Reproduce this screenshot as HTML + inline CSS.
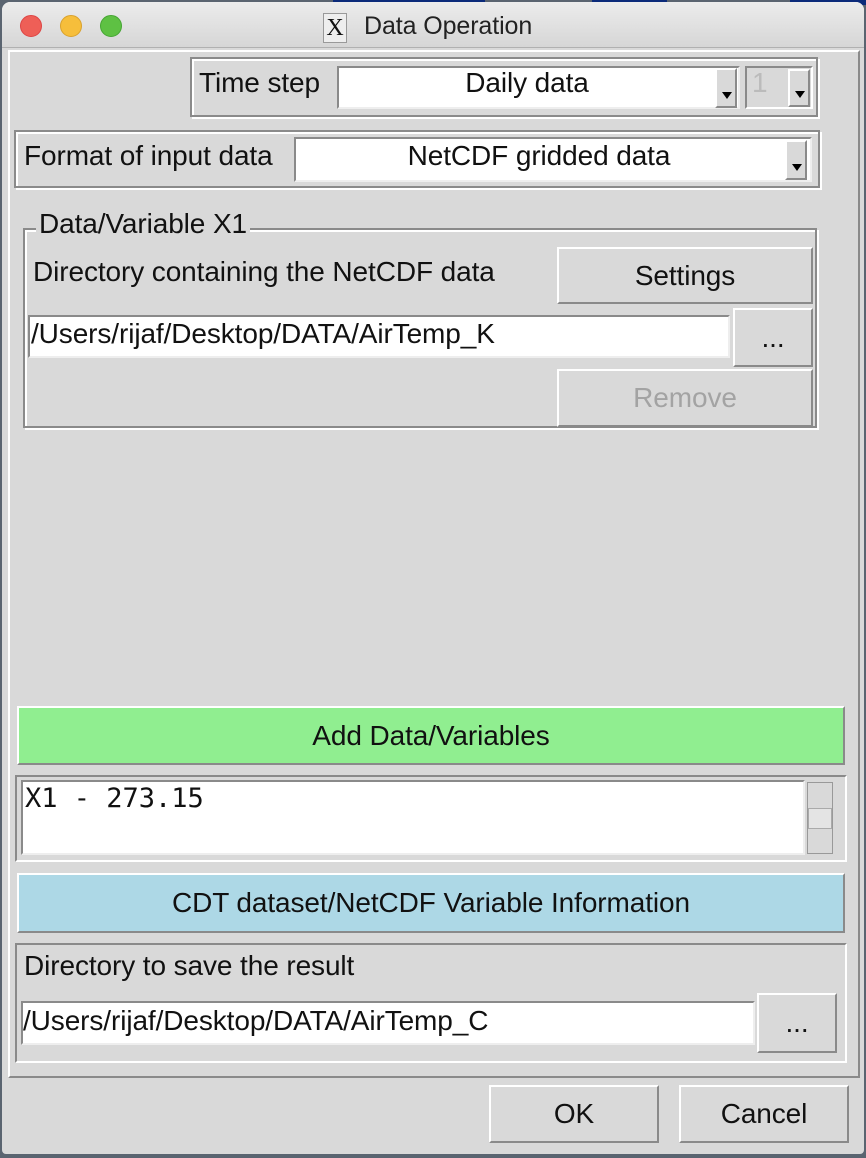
<!DOCTYPE html>
<html><head><meta charset="utf-8"><style>
*{box-sizing:border-box;margin:0;padding:0}
body{width:866px;height:1158px;background:#5a6470;position:relative;overflow:hidden;font-family:"Liberation Sans",Arial,sans-serif;font-size:28px;color:#111;letter-spacing:-0.1px}
.a{position:absolute}
.win{left:2px;top:2px;width:862px;height:1152px;background:#d9d9d9;border-radius:8px 8px 4px 4px;overflow:hidden}
.title{left:0;top:0;width:862px;height:46px;background:linear-gradient(#ececec,#d6d6d6);border-bottom:1px solid #b0b0b0}
.dot{width:22px;height:22px;border-radius:50%;top:13px}
.sunk{border-style:solid;border-width:2px;border-color:#8a8a8a #fff #fff #8a8a8a}
.raise{border-style:solid;border-width:2px;border-color:#fff #8a8a8a #8a8a8a #fff}
.groove{border:2px solid #8a8a8a;box-shadow:inset 2px 2px 0 #fff,2px 2px 0 #fff}
.ent{background:#fff;border-style:solid;border-width:2px;border-color:#8a8a8a #eee #eee #8a8a8a}
.btn{background:#d9d9d9;display:flex;align-items:center;justify-content:center}
.arr{width:22px;background:#d9d9d9}
.arr:after{content:"";position:absolute;left:5px;bottom:7px;border-left:5px solid transparent;border-right:5px solid transparent;border-top:7px solid #000}
.t{white-space:nowrap}
</style></head><body>
<div class="a" style="left:333px;top:0;width:152px;height:5px;background:#0b2a7a"></div>
<div class="a" style="left:592px;top:0;width:75px;height:5px;background:#0b2a7a"></div>
<div class="a" style="left:790px;top:0;width:76px;height:5px;background:#0b2a7a"></div>
<div class="a win">
 <div class="a title"></div>
 <div class="a dot" style="left:18px;background:#ee5f57;border:1px solid #d44"></div>
 <div class="a dot" style="left:58px;background:#f6be3b;border:1px solid #d9a12c"></div>
 <div class="a dot" style="left:98px;background:#5ec143;border:1px solid #45a532"></div>
 <div class="a" style="left:321px;top:11px;width:24px;height:30px;border:1px solid #999;background:#eee;font-family:'Liberation Serif',serif;font-size:24px;text-align:center;line-height:28px">X</div>
 <div class="a t" style="left:362px;top:10px;font-size:25px;color:#222">Data Operation</div>
 <div class="a sunk" style="left:6px;top:48px;width:852px;height:1028px;border-color:#fff #8a8a8a #8a8a8a #fff"></div>
 <div class="a groove" style="left:188px;top:55px;width:628px;height:60px"></div>
 <div class="a t" style="left:197px;top:65px">Time step</div>
 <div class="a ent" style="left:335px;top:64px;width:403px;height:43px"></div>
 <div class="a t" style="left:335px;top:65px;width:380px;text-align:center">Daily data</div>
 <div class="a arr raise" style="left:713px;top:66px;height:40px"></div>
 <div class="a sunk" style="left:743px;top:64px;width:68px;height:43px"></div>
 <div class="a t" style="left:750px;top:65px;color:#bbb">1</div>
 <div class="a arr raise" style="left:786px;top:67px;height:38px"></div>
 <div class="a groove" style="left:12px;top:128px;width:806px;height:58px"></div>
 <div class="a t" style="left:22px;top:138px">Format of input data</div>
 <div class="a ent" style="left:292px;top:135px;width:518px;height:45px"></div>
 <div class="a t" style="left:292px;top:138px;width:490px;text-align:center">NetCDF gridded data</div>
 <div class="a arr raise" style="left:783px;top:138px;height:40px"></div>
 <div class="a groove" style="left:21px;top:226px;width:794px;height:200px"></div>
 <div class="a t" style="left:34px;top:206px;background:#d9d9d9;padding:0 3px">Data/Variable X1</div>
 <div class="a t" style="left:31px;top:254px">Directory containing the NetCDF data</div>
 <div class="a btn raise" style="left:555px;top:245px;width:256px;height:57px">Settings</div>
 <div class="a ent" style="left:26px;top:313px;width:702px;height:43px"></div>
 <div class="a t" style="left:29px;top:316px">/Users/rijaf/Desktop/DATA/AirTemp_K</div>
 <div class="a btn raise" style="left:731px;top:306px;width:80px;height:59px">...</div>
 <div class="a btn raise" style="left:555px;top:367px;width:256px;height:58px;color:#a3a3a3">Remove</div>
 <div class="a btn raise" style="left:15px;top:704px;width:828px;height:59px;background:#90ee90">Add Data/Variables</div>
 <div class="a sunk" style="left:13px;top:773px;width:832px;height:87px;border-color:#8a8a8a #fff #fff #8a8a8a"></div>
 <div class="a ent" style="left:19px;top:778px;width:784px;height:75px"></div>
 <div class="a t" style="left:23px;top:781px;font-family:'DejaVu Sans Mono','Liberation Mono',monospace;font-size:27px;letter-spacing:0">X1 - 273.15</div>
 <div class="a" style="left:805px;top:780px;width:26px;height:72px;background:#d9d9d9;border:1px solid #999"></div>
 <div class="a" style="left:806px;top:806px;width:24px;height:21px;border:1px solid #aaa;background:#e4e4e4"></div>
 <div class="a btn raise" style="left:15px;top:871px;width:828px;height:60px;background:#add8e6">CDT dataset/NetCDF Variable Information</div>
 <div class="a sunk" style="left:13px;top:941px;width:832px;height:120px;border-color:#8a8a8a #fff #fff #8a8a8a"></div>
 <div class="a t" style="left:22px;top:948px">Directory to save the result</div>
 <div class="a ent" style="left:19px;top:999px;width:734px;height:44px"></div>
 <div class="a t" style="left:21px;top:1003px">/Users/rijaf/Desktop/DATA/AirTemp_C</div>
 <div class="a btn raise" style="left:755px;top:991px;width:80px;height:60px">...</div>
 <div class="a btn raise" style="left:487px;top:1083px;width:170px;height:58px">OK</div>
 <div class="a btn raise" style="left:677px;top:1083px;width:170px;height:58px">Cancel</div>
</div>
</body></html>
